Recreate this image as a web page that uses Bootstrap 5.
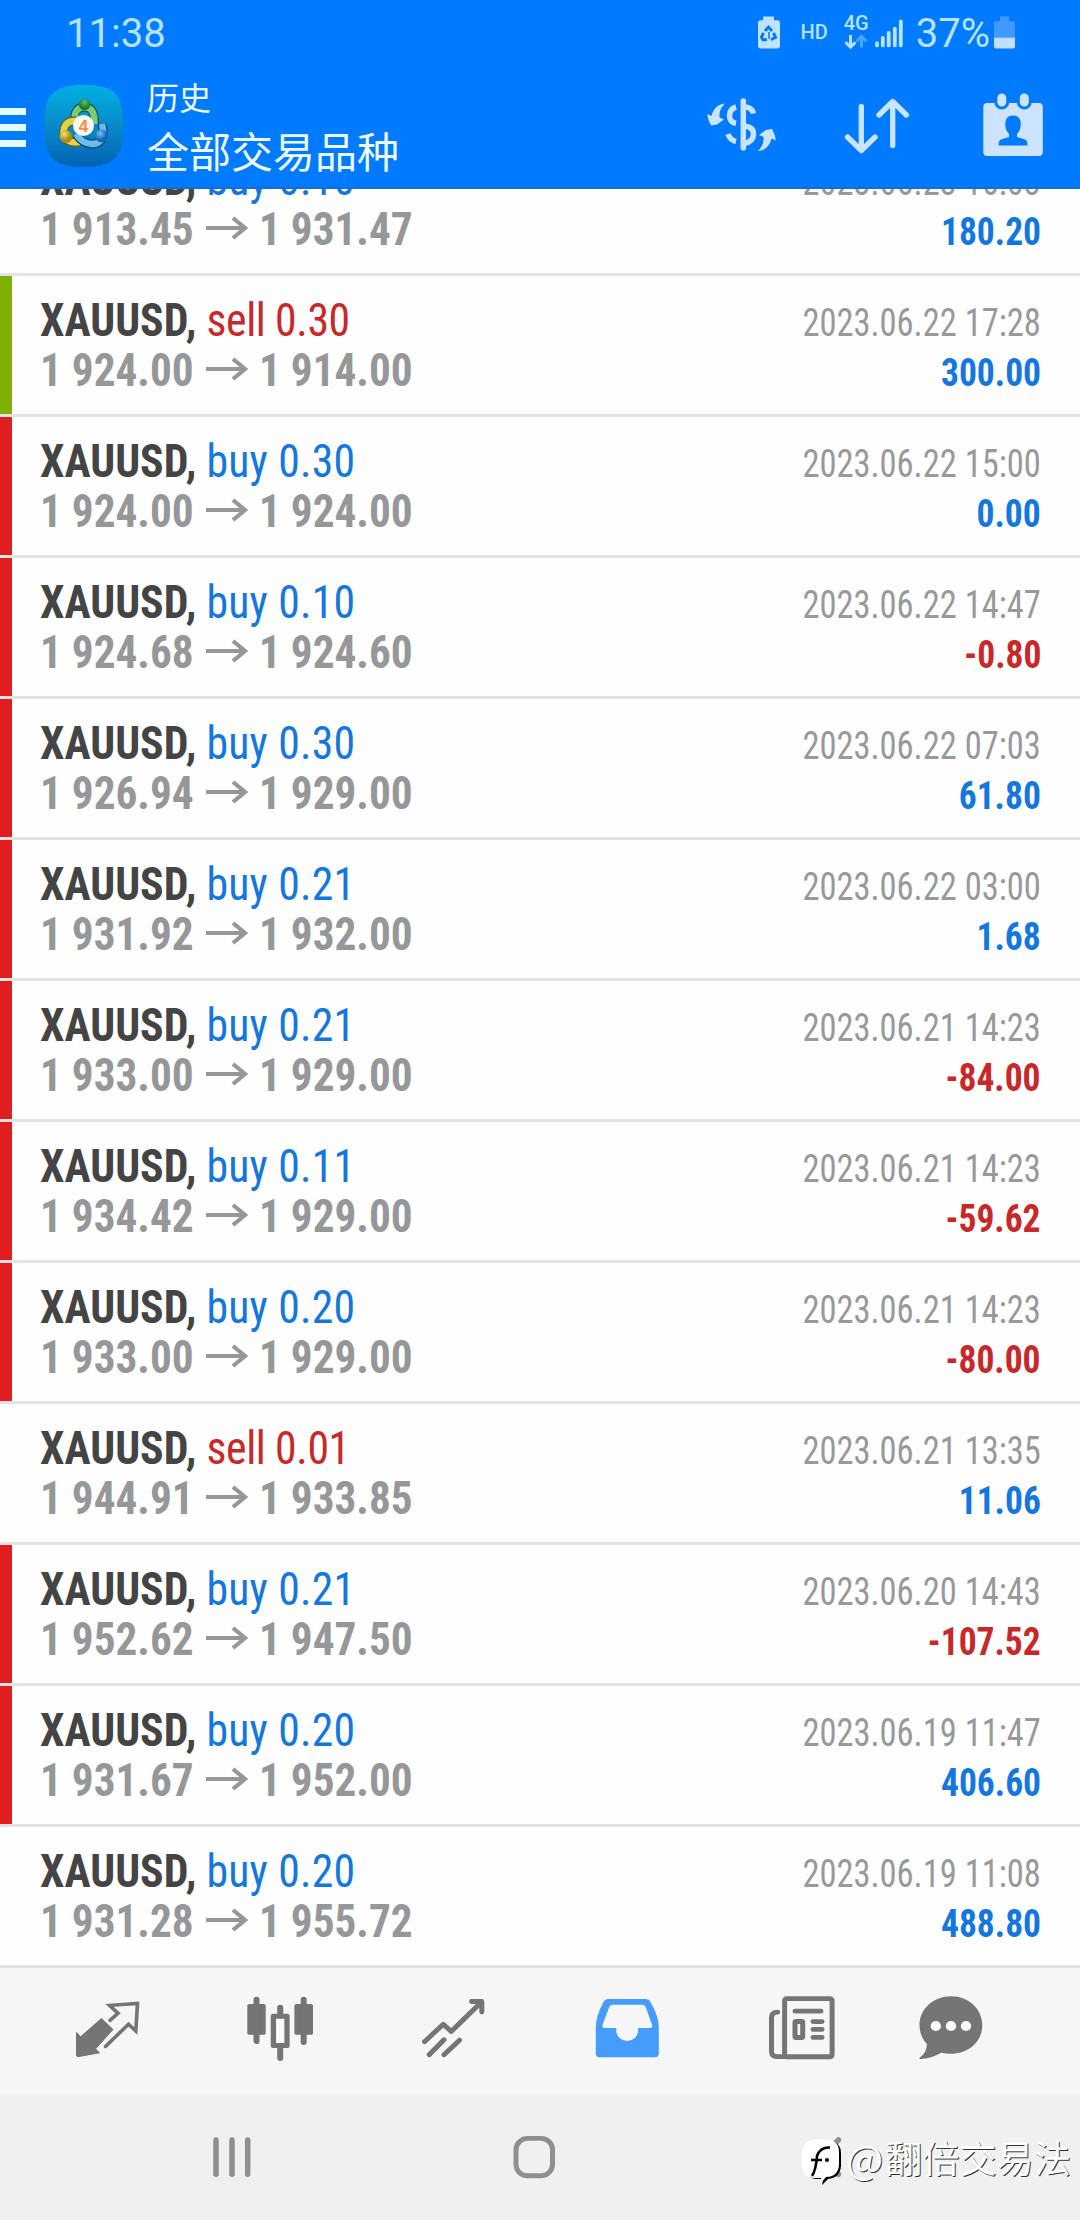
<!DOCTYPE html>
<html lang="zh-CN">
<head>
<meta charset="utf-8">
<meta name="viewport" content="width=device-width, initial-scale=1">
<title>历史</title>
<link href="https://cdn.jsdelivr.net/npm/bootstrap@5.3.0/dist/css/bootstrap.min.css" rel="stylesheet">
<style>
body{width:1080px;height:2220px;overflow:hidden;font-family:Roboto,"Noto Sans CJK SC",sans-serif;background:#fefefe}
svg{display:block;flex:none}
.topbar{height:189px;background:#007aff;border-bottom:2px solid #1a6cd0}
.status{height:68px;color:#b4e2ff;padding:0 64px 0 66px}
.status svg{transform:scaleY(.968);transform-origin:0 0}
.clock{font-size:40px;line-height:67px}
.hd{font-size:20px;font-weight:500;line-height:65px;margin-left:19px}
.net{margin-left:16px;width:24px;padding-top:12px}
.net b{display:block;font-size:20px;font-weight:500;line-height:23px}
.pct{font-size:40px;line-height:67px;margin-left:12px}
.appbar{height:119px}
.burger{width:26px;padding-top:40px}
.burger i{display:block;height:7px;background:#e4faff;margin-bottom:9px}
.logo{margin:16px 0 0 18px}
.heading{color:#ecfbff;font-family:"Noto Sans CJK SC",sans-serif;margin-left:23px}
.head-sub{font-size:32px;line-height:40px;padding-top:8px}
.head-main{font-size:42px;line-height:50px;padding-top:9px}
.tools{padding-left:302px}
.history{height:1779px}
.deal{flex:none;height:141px;border-bottom:3px solid #e3e3e3;padding:19px 39px 0 40px}
.deal-body{height:50px;line-height:50px;white-space:nowrap}
.hit-tp{background:linear-gradient(#7fb004,#7fb004) 0 0/12px 100% no-repeat}
.hit-sl{background:linear-gradient(#e01e20,#e01e20) 0 0/12px 100% no-repeat}
.sym,.quote,.when,.gain{font-stretch:condensed;display:inline-block}
.sym{font-size:46px;color:#444;transform:scaleX(.95);transform-origin:0 50%}
.sym .up{letter-spacing:.2px}
.sym .down{letter-spacing:-.4px}
.quote{font-size:46px;font-weight:700;color:#959799;transform:scaleX(.94);transform-origin:0 50%}
.from{width:166px}
.when{font-size:38px;color:#97999b;transform:scaleX(.907);transform-origin:100% 50%}
.gain{font-size:38px;font-weight:700;transform:scaleX(.935);transform-origin:100% 50%}
.up{color:#1477dd}.down{color:#c8282a}
.tabs{height:126px;background:#f6f6f6;padding-left:57px;gap:73px}
.tabs svg{transform:scaleY(.968);transform-origin:0 -28px}
.tab-news{margin-left:4px}.tab-chat{margin-left:-25px}
.sysnav{height:126px;background:#f0f0f0}
.sysnav>svg{transform:scaleY(.968);transform-origin:0 -154px}
.sysnav .home{margin-left:252px}.sysnav .back{margin-left:257px}
.recent{margin-left:206px}
.stamp{right:9px;top:38px;color:#fff;font:400 37.2px/50px "Noto Sans CJK SC",sans-serif;text-shadow:1px 1px 0 #333}
.stamp-at{font-size:39px;margin:0 2px 0 -1px}
.stamp svg{margin-top:-1px}
</style>
<script src="https://cdn.jsdelivr.net/npm/bootstrap@5.3.0/dist/js/bootstrap.bundle.min.js"></script>
</head>
<body class="d-flex flex-column">
<header class="topbar flex-shrink-0">
  <div class="status d-flex">
    <span class="clock me-auto">11:38</span>
    <svg width="24" height="68" viewBox="759 0 24 68"><path fill="#bfe2ff" d="M765 20v-2q0-1 1-1h9q1 0 1 1v3h3q3 0 3 3v23q0 3-3 3h-16q-3 0-3-3v-23q0-3 3-3h2z"/><g fill="none" stroke="#007aff" stroke-width="3"><path d="M767 32l3.500-4 3.500 4M775.500 34l2 4.500-4.500 2.500M769 41h-4l-1.500-2.500 2-4.500"/></g><path stroke="#007aff" stroke-width="1.500" d="M771 33v7"/></svg>
    <span class="hd">HD</span>
    <span class="net"><b>4G</b><svg width="24" height="15" viewBox="845 36 24 15" fill="none" stroke-width="3"><path stroke="#b4e2ff" d="M851.500 36v12M846.500 43.500l5 5 5-5"/><path stroke="#4ba3ff" d="M862.500 49V38M857.500 42.500l5-5 5 5"/></svg></span>
    <svg width="29" height="68" viewBox="876 0 29 68" style="margin-left:7px" stroke="#b4e2ff" stroke-width="3.800" stroke-linecap="round"><path d="M878 44.500v2.500M883.800 39v8M889.700 34v13M895.800 29.500v17.500M901.800 22v25"/></svg>
    <span class="pct">37%</span>
    <svg class="ms-1" width="22" height="68" viewBox="994 0 22 68"><path fill="#4199ff" d="M1000 22v-5h9v5h4q2 0 2 2v16h-21v-16q0-2 2-2z"/><path fill="#c1ddff" d="M994 39h21v9q0 2-2 2h-17q-2 0-2-2z"/></svg>
  </div>
  <div class="appbar d-flex">
    <div class="burger"><i></i><i></i><i></i></div>
    <svg class="logo" width="80" height="84" viewBox="44 84 80 84"><defs><linearGradient id="bg" x2="0" y2="1"><stop stop-color="#00b0e4"/><stop offset=".5" stop-color="#088ac8"/><stop offset="1" stop-color="#0262b4"/></linearGradient><radialGradient id="gr" cy=".3"><stop stop-color="#5fc26a"/><stop offset="1" stop-color="#1a7e38"/></radialGradient><radialGradient id="ye" cx=".35" cy=".3"><stop stop-color="#f4e370"/><stop offset="1" stop-color="#a88d14"/></radialGradient><radialGradient id="bl" cx=".4" cy=".3"><stop stop-color="#6ec4f4"/><stop offset="1" stop-color="#1668b0"/></radialGradient></defs>
      <path fill="url(#bg)" d="M84 85C115 85 123 94 123.500 126C123 158 113 167 84 167C54 167 44 158 44 126C44 94 54 85 84 85Z"/>
      <g fill="none"><path stroke="#145a42" stroke-width="9" d="M74.500 121Q74 107 84.500 107T94.500 124"/><path stroke="#7ccb78" stroke-width="6.500" d="M74.500 121Q74 107 84.500 107T94.500 124"/>
      <path stroke="#5b6320" stroke-width="9" d="M76 121Q63 120 63.500 135Q67 144 80 142"/><path stroke="#e3d04c" stroke-width="6.500" d="M76 121Q63 120 63.500 135Q67 144 80 142"/>
      <path stroke="#0d4683" stroke-width="9" d="M76 134Q84 146 96 143.500Q106 140 102 124"/><path stroke="#6cbcec" stroke-width="6.500" d="M76 134Q84 146 96 143.500Q106 140 102 124"/></g>
      <circle cx="84.500" cy="104.500" r="5.800" fill="url(#gr)"/><circle cx="66" cy="136.500" r="6.500" fill="url(#ye)"/><circle cx="101.500" cy="136" r="6.500" fill="url(#bl)"/>
      <circle cx="83.500" cy="125.500" r="10.500" fill="#f7f7f5"/><text x="83.500" y="131.500" text-anchor="middle" font-family="Liberation Sans" font-size="17" font-weight="700" fill="#f0913c">4</text></svg>
    <div class="heading"><div class="head-sub">历史</div><div class="head-main">全部交易品种</div></div>
    <div class="tools d-flex">
      <svg width="80" height="119" viewBox="700 68 80 119"><g fill="none" stroke="#c8e4ff" stroke-width="5.500"><path d="M742.300 101v47" stroke-linecap="round"/><path d="M735 107Q728.500 109 728.500 115.500T735 123.500M743 107Q751 107 752.500 113.500M743 126Q753 127 752.500 134.500Q752 142 743 143.500M727 134Q729 140 735 141.500"/></g><g fill="#c8e4ff"><path id="sw" d="M724 103.500C717 104 712 109 710.500 116L706 114L707.500 120L710 125.500L716 124.500L723 119.500L718.500 117.500C718 112 720 107 724 103.500Z"/><use href="#sw" transform="rotate(180 740.500 127.200)"/></g></svg>
      <svg width="80" height="119" viewBox="836 68 80 119" style="margin-left:56px" fill="none" stroke="#c8e4ff" stroke-width="5.300" stroke-linecap="round" stroke-linejoin="round"><path d="M860.300 106.500v43.500M846.500 137l13.800 13.500 13.800-13.500M891.700 145.500V102M878 115l13.700-13.500 13.700 13.500"/></svg>
      <svg width="62" height="119" viewBox="981 68 62 119" style="margin-left:65px"><rect x="982.300" y="103" width="59.500" height="53" rx="4" fill="#cce4ff"/><g fill="#cce4ff" stroke="#007aff" stroke-width="3"><rect x="994.800" y="92" width="12" height="16" rx="6"/><rect x="1017.300" y="92" width="12" height="16" rx="6"/></g><path fill="#007aff" d="M1012 115.500q8 0 7.800 9q-.3 6-3.800 9.500v3l8 2.500q2.500 1 2.500 6h-29q0-5 2.500-6l8-2.500v-3q-3.500-3.500-3.800-9.500q-.2-9 7.800-9z"/></svg>
    </div>
  </div>
</header>
<main class="history d-flex flex-column justify-content-end overflow-hidden flex-shrink-0" id="history"></main>
<nav class="tabs d-flex flex-shrink-0">
  <svg width="100" height="126" viewBox="57 1968 100 126"><path fill="#757575" stroke="#757575" stroke-linejoin="round" d="M76.500 2035.500L80.500 2040L101.500 2021L113 2032.500L95.500 2052.500L99.500 2056.500L78 2060.500L76.500 2059.500Z"/><path fill="none" stroke="#757575" stroke-width="3.600" d="M110 2023L118 2015.700L109.500 2007.500L137.500 2005.500L135.800 2034L128.500 2027L105.500 2050" stroke-linecap="round"/></svg>
  <svg width="100" height="126" viewBox="230 1968 100 126" fill="#757575"><rect x="247.300" y="2006" width="18.400" height="32" rx="2"/><rect x="294.400" y="2006" width="18.600" height="32" rx="2"/><path fill="none" stroke="#757575" stroke-width="6" stroke-linecap="round" d="M256.500 2001.500v43M303.700 2001.500v44M280.200 2010v7M280.200 2050v12"/><rect x="273.400" y="2018.800" width="13.600" height="30.200" fill="#fafafa" stroke="#757575" stroke-width="5.300" stroke-linejoin="round"/></svg>
  <svg width="100" height="126" viewBox="403 1968 100 126" fill="none" stroke="#757575" stroke-width="5" stroke-linecap="round" stroke-linejoin="round"><path d="M424.500 2045L443.300 2027L451.200 2034.500L481.500 2004M471.500 2003.500H481.800V2014.500M429.200 2058.500L444 2043M444 2058.500L459.500 2043.500"/></svg>
  <svg width="100" height="126" viewBox="576 1968 100 126"><path fill="#459cfb" fill-rule="evenodd" d="M608.500 2001H646Q649 2001 650.500 2004Q658.800 2019 658.800 2030V2057Q658.800 2061 655 2061H599.500Q595.800 2061 595.800 2057V2030Q596 2018 603.500 2004Q605 2001 608.500 2001ZM613 2007Q610 2007 609 2010L602.300 2028Q602 2031 604.500 2031H616.300V2034A10.900 10.300 0 0 0 638.100 2034V2031H650Q652.800 2031 652.200 2028L646 2010Q645 2007 642.500 2007Z"/></svg>
  <svg class="tab-news" width="100" height="126" viewBox="753 1968 100 126" fill="none" stroke="#757575" stroke-width="5"><rect x="784.600" y="2000.600" width="47.500" height="60" rx="2"/><path d="M777.800 2014.500Q771.500 2014.500 771.500 2020V2055Q771.500 2060.500 777 2060.500H785M795 2013.500h26M813 2024.300h9M813 2032.400h9M813 2040.600h9" stroke-linecap="round"/><rect x="795" y="2024.200" width="7.700" height="16.500" rx="1"/></svg>
  <svg class="tab-chat" width="100" height="126" viewBox="901 1968 100 126"><path fill="#757575" d="M951 1998C968.500 1998 982.300 2011 982.300 2028S968.500 2057.500 951 2057.500Q945 2057.500 941.500 2056.500Q931 2062.500 920.500 2063Q919 2063 919.800 2061.500Q927 2056 926.800 2047.500Q919.500 2039 919.500 2028C919.500 2011 933.500 1998 951 1998Z"/><g fill="#fafafa"><circle cx="935.800" cy="2028.800" r="5.200"/><circle cx="951" cy="2028.800" r="5.200"/><circle cx="966" cy="2028.800" r="5.200"/></g></svg>
</nav>
<footer class="sysnav d-flex flex-shrink-0 position-relative">
  <svg class="recent" width="52" height="126" viewBox="206 2094 52 126" stroke="#8f8f8f" stroke-width="5.500" stroke-linecap="round"><path d="M216 2146.500v35.500M232 2146.500v35.500M247.700 2146.500v35.500"/></svg>
  <svg class="home" width="48" height="126" viewBox="510 2094 48 126"><rect x="516" y="2145" width="36.500" height="38.500" rx="11.500" fill="none" stroke="#8f8f8f" stroke-width="5"/></svg>
  <svg class="back" width="32" height="126" viewBox="822 2094 32 126" fill="none" stroke="#8f8f8f" stroke-width="5.500" stroke-linecap="round"><path d="M845.500 2146.500L828 2164.500L845.500 2182"/></svg>
  <div class="stamp position-absolute d-flex align-items-start">
    <svg width="46" height="58" viewBox="799 2138 46 58"><path d="M814 2148H827Q839 2149 839 2160V2173Q838 2185 826 2186L820 2192L821 2186H814Q802 2185 802 2173V2160Q802 2149 814 2148Z" fill="#000"/><path d="M813 2146.500H825Q837 2147.500 837 2159V2172Q836 2184 824 2184L819 2190V2185H813Q801 2186 800 2172V2159Q801 2147.500 813 2146.500Z" fill="#fff"/><path d="M810 2183Q814 2177 815 2163Q818 2154 828 2154.500M809 2167H820" fill="none" stroke="#000" stroke-width="2.600"/><circle cx="825" cy="2167" r="2" fill="#000"/></svg><span class="stamp-at">@</span><span>翻倍交易法</span>
  </div>
</footer>
<script>
// side, volume, open, close, time, profit, marker
const deals = [
  ['buy','0.10','1 913.45','1 931.47','2023.06.23 16:03','180.20',''],
  ['sell','0.30','1 924.00','1 914.00','2023.06.22 17:28','300.00','hit-tp'],
  ['buy','0.30','1 924.00','1 924.00','2023.06.22 15:00','0.00','hit-sl'],
  ['buy','0.10','1 924.68','1 924.60','2023.06.22 14:47','-0.80','hit-sl'],
  ['buy','0.30','1 926.94','1 929.00','2023.06.22 07:03','61.80','hit-sl'],
  ['buy','0.21','1 931.92','1 932.00','2023.06.22 03:00','1.68','hit-sl'],
  ['buy','0.21','1 933.00','1 929.00','2023.06.21 14:23','-84.00','hit-sl'],
  ['buy','0.11','1 934.42','1 929.00','2023.06.21 14:23','-59.62','hit-sl'],
  ['buy','0.20','1 933.00','1 929.00','2023.06.21 14:23','-80.00','hit-sl'],
  ['sell','0.01','1 944.91','1 933.85','2023.06.21 13:35','11.06',''],
  ['buy','0.21','1 952.62','1 947.50','2023.06.20 14:43','-107.52','hit-sl'],
  ['buy','0.20','1 931.67','1 952.00','2023.06.19 11:47','406.60','hit-sl'],
  ['buy','0.20','1 931.28','1 955.72','2023.06.19 11:08','488.80','']
];
document.getElementById('history').innerHTML = deals.map(([side,vol,a,b,t,p,m]) => `
<article class="deal ${m}">
  <div class="deal-body d-flex justify-content-between align-items-baseline"><span class="sym"><b>XAUUSD,</b> <span class="${side==='buy'?'up':'down'}">${side} ${vol}</span></span><span class="when">${t}</span></div>
  <div class="deal-body d-flex align-items-baseline"><span class="quote from">${a}</span><svg class="align-self-start" width="44" height="50" viewBox="0 0 44 50" fill="none" stroke="#959799" stroke-width="4.200"><path d="M0 24h39M27 14l12 10-12 10"/></svg><span class="quote" style="margin-left:9px">${b}</span><span class="gain ms-auto ${p[0]==='-'?'down':'up'}">${p}</span></div>
</article>`).join('');
</script>
</body>
</html>
